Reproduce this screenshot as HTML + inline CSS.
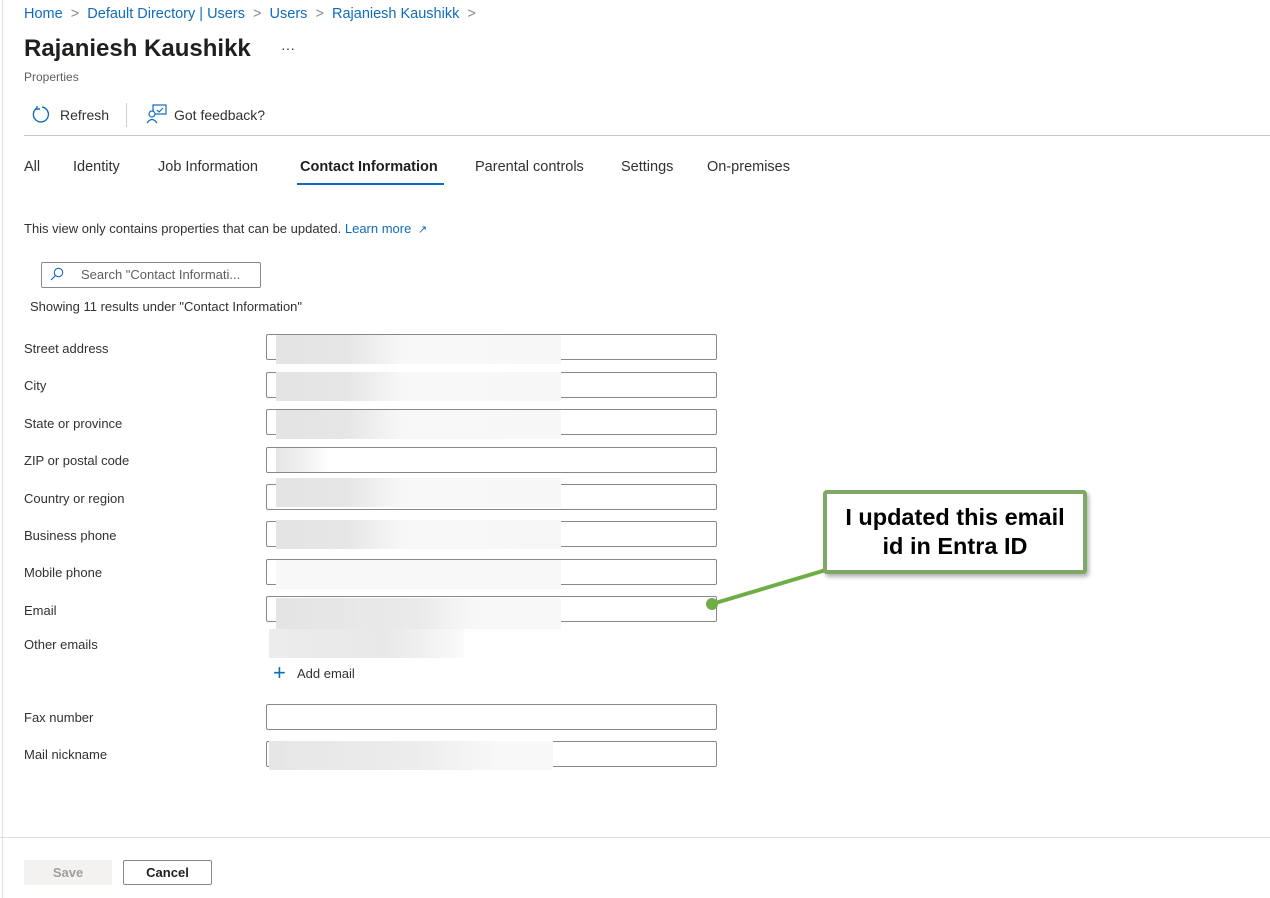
<!DOCTYPE html>
<html><head><style>
body{margin:0;width:1270px;height:898px;background:#fff;font-family:"Liberation Sans",sans-serif;color:#323130;position:relative;overflow:hidden}
.a{position:absolute;white-space:nowrap}
.lnk{color:#0f6cbd}
.lbl{font-size:13px;left:24px}
.in{position:absolute;left:266px;width:449px;height:24px;border:1px solid #8a8886;border-radius:2px;background:#fff}
.bl{position:absolute;left:276px;width:285px;height:29px;background:linear-gradient(90deg,#e4e4e4 0%,#e6e6e6 25%,#f8f8f8 45%,#f7f7f7 100%)}
.tab{font-size:14.5px;top:159px}
</style></head><body>
<div style="position:absolute;left:2px;top:0;width:1px;height:898px;background:#e1dfdd"></div>
<div class="a lnk" style="left:24px;top:6px;font-size:14.5px">Home <span style="color:#8a8886">&nbsp;&gt;&nbsp;</span> Default Directory | Users <span style="color:#8a8886">&nbsp;&gt;&nbsp;</span> Users <span style="color:#8a8886">&nbsp;&gt;&nbsp;</span> Rajaniesh Kaushikk <span style="color:#8a8886">&nbsp;&gt;</span></div>
<div class="a" style="left:24px;top:35px;font-size:24px;font-weight:bold;color:#201f1e">Rajaniesh Kaushikk</div>
<div class="a" style="left:281px;top:40px;font-size:14px">···</div>
<div class="a" style="left:24px;top:70px;font-size:12px;color:#605e5c">Properties</div>
<svg class="a" style="left:32px;top:105px" width="19" height="19" viewBox="0 0 19 19"><path d="M5 3 A7.5 7.5 0 1 0 10 2" fill="none" stroke="#0f6cbd" stroke-width="1.4"/><path d="M5 1 V4 H8" fill="none" stroke="#0f6cbd" stroke-width="1.4"/></svg>
<div class="a" style="left:60px;top:107px;font-size:14px">Refresh</div>
<div style="position:absolute;left:126px;top:103px;width:1px;height:24px;background:#d2d0ce"></div>
<svg class="a" style="left:146px;top:104px" width="22" height="20" viewBox="0 0 22 20"><rect x="7" y="1" width="13" height="9" fill="none" stroke="#0f6cbd" stroke-width="1.2"/><circle cx="6" cy="10" r="3" fill="#fff" stroke="#0f6cbd" stroke-width="1.2"/><path d="M1 19 Q6 12 11 19" fill="none" stroke="#0f6cbd" stroke-width="1.2"/><path d="M11 6 l2 2 l4 -4" fill="none" stroke="#0f6cbd" stroke-width="1.2"/></svg>
<div class="a" style="left:174px;top:107px;font-size:14px">Got feedback?</div>
<div style="position:absolute;left:24px;top:135px;width:1246px;height:1px;background:#c8c6c4"></div>
<div class="a tab" style="left:24px">All</div>
<div class="a tab" style="left:73px">Identity</div>
<div class="a tab" style="left:158px">Job Information</div>
<div class="a tab" style="left:300px;font-weight:bold;color:#201f1e">Contact Information</div>
<div style="position:absolute;left:297px;top:183px;width:147px;height:2px;background:#0f6cbd"></div>
<div class="a tab" style="left:475px">Parental controls</div>
<div class="a tab" style="left:621px">Settings</div>
<div class="a tab" style="left:707px">On-premises</div>
<div class="a" style="left:24px;top:221px;font-size:13px">This view only contains properties that can be updated. <span class="lnk">Learn more</span> <span class="lnk" style="font-size:11px">&nbsp;↗</span></div>
<div style="position:absolute;left:41px;top:262px;width:218px;height:24px;border:1px solid #8a8886;border-radius:2px"></div>
<svg class="a" style="left:50px;top:267px" width="14" height="14" viewBox="0 0 14 14"><circle cx="8.5" cy="5.5" r="4.2" fill="none" stroke="#0f6cbd" stroke-width="1.1"/><path d="M5.5 8.5 L1 13" stroke="#0f6cbd" stroke-width="1.2"/></svg>
<div class="a" style="left:81px;top:267px;font-size:13px;color:#605e5c">Search "Contact Informati...</div>
<div class="a" style="left:30px;top:299px;font-size:13px">Showing 11 results under "Contact Information"</div>

<div class="a lbl" style="top:341px">Street address</div><div class="in" style="top:334px"></div><div class="bl" style="top:335px"></div>
<div class="a lbl" style="top:378px">City</div><div class="in" style="top:372px"></div><div class="bl" style="top:372px"></div>
<div class="a lbl" style="top:416px">State or province</div><div class="in" style="top:409px"></div><div class="bl" style="top:410px"></div>
<div class="a lbl" style="top:453px">ZIP or postal code</div><div class="in" style="top:447px"></div><div class="bl" style="top:448px;height:24px;background:linear-gradient(90deg,#e6e6e6,#eeeeee 40%,#fff 100%);width:55px"></div>
<div class="a lbl" style="top:491px">Country or region</div><div class="in" style="top:484px"></div><div class="bl" style="top:478px"></div>
<div class="a lbl" style="top:528px">Business phone</div><div class="in" style="top:521px"></div><div class="bl" style="top:520px"></div>
<div class="a lbl" style="top:565px">Mobile phone</div><div class="in" style="top:559px"></div><div class="bl" style="top:560px;background:#f8f8f8"></div>
<div class="a lbl" style="top:603px">Email</div><div class="in" style="top:596px"></div><div class="bl" style="top:598px;height:31px;background:linear-gradient(90deg,#e4e4e4,#eaeaea 50%,#f8f8f8 70%)"></div>
<div class="a lbl" style="top:637px">Other emails</div>
<div class="bl" style="top:629px;left:269px;width:195px;background:linear-gradient(90deg,#ececec,#e8e8e8 60%,#fafafa)"></div>
<div class="a" style="left:273px;top:662px;font-size:22px;color:#0f6cbd;line-height:22px">+</div>
<div class="a" style="left:297px;top:666px;font-size:13px">Add email</div>
<div class="a lbl" style="top:710px">Fax number</div><div class="in" style="top:704px"></div>
<div class="a lbl" style="top:747px">Mail nickname</div><div class="in" style="top:741px"></div><div class="bl" style="top:741px;left:269px;width:284px;background:linear-gradient(90deg,#e6e6e6,#ececec 50%,#f8f8f8 80%)"></div>

<svg class="a" style="left:0;top:0" width="1270" height="898"><line x1="712" y1="604" x2="826" y2="570" stroke="#70ad47" stroke-width="4"/><circle cx="712" cy="604" r="6" fill="#70ad47"/></svg>
<div style="position:absolute;left:823px;top:490px;width:256px;height:76px;border:4px solid #7ea865;border-radius:4px;background:#fff;box-shadow:2px 3px 4px rgba(0,0,0,.3)"></div>
<div class="a" style="left:823px;top:503px;width:264px;text-align:center;font-size:23.5px;font-weight:bold;color:#000;line-height:29px">I updated this email<br>id in Entra ID</div>

<div style="position:absolute;left:0;top:837px;width:1270px;height:1px;background:#e1dfdd"></div>
<div class="a" style="left:24px;top:860px;width:88px;height:25px;background:#f3f2f1;color:#a19f9d;font-size:13px;font-weight:bold;text-align:center;line-height:25px">Save</div>
<div class="a" style="left:123px;top:860px;width:87px;height:23px;border:1px solid #8a8886;border-radius:2px;font-size:13px;font-weight:bold;text-align:center;line-height:23px;color:#201f1e">Cancel</div>
</body></html>
